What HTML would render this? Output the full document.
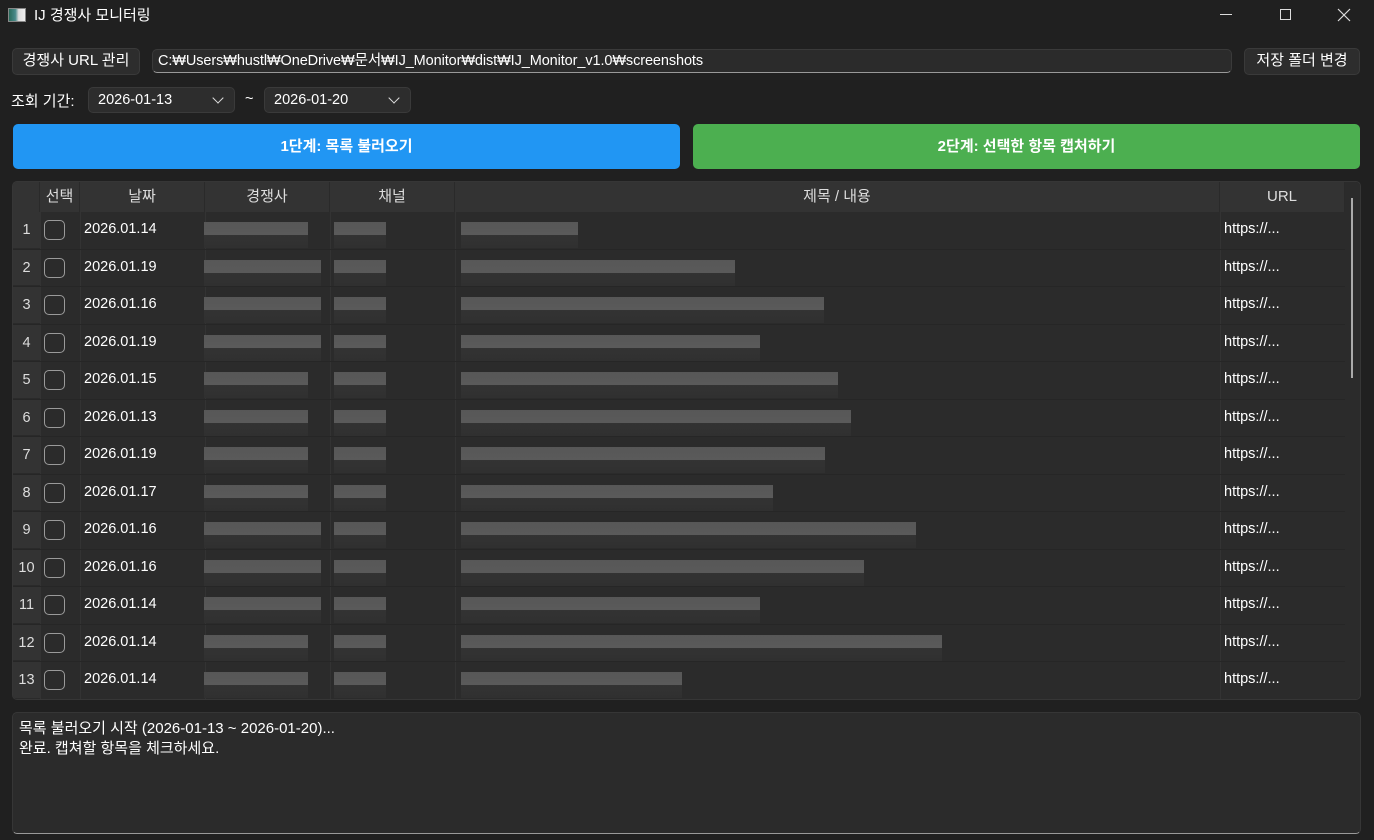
<!DOCTYPE html>
<html><head><meta charset="utf-8">
<style>
*{box-sizing:border-box;margin:0;padding:0}
body{width:1374px;height:840px;background:#202020;font-family:"Segoe UI","Liberation Sans","Noto Sans CJK KR",sans-serif;color:#fff;font-size:14.5px;position:relative;overflow:hidden}
.a{position:absolute}
.btn{background:#2d2d2d;border:1px solid #3a3a3a;border-radius:5px;text-align:center;line-height:24px;font-size:15px}
.combo{background:#2d2d2d;border:1px solid #3a3a3a;border-radius:5px;font-size:14.5px;padding-left:9px;line-height:24px}
.chev{position:absolute;right:12px;top:6px;width:8px;height:8px;border-right:1.5px solid #ddd;border-bottom:1.5px solid #ddd;transform:rotate(45deg)}
.tbl{left:12px;top:181px;width:1349px;height:519px;background:#2b2b2b;border:1px solid #363636;border-radius:5px;overflow:hidden}
.hd{position:absolute;top:0;height:30px;background:#333;border-right:1px solid #2a2a2a;line-height:30px;text-align:center;color:#ddd;font-size:15px}
.row{position:absolute;left:0;width:1332px;height:37.5px;border-bottom:1px solid #262626}
.vh{position:absolute;left:0;width:27px;height:100%;background:#333;color:#ddd;text-align:center;font-size:14.5px;padding-top:10px;border-bottom:1px solid #2a2a2a}
.cb{position:absolute;left:31px;top:8px;width:21px;height:20px;border:1.5px solid #9a9a9a;border-radius:5px}
.dt{position:absolute;left:71px;top:9px;font-size:14.5px}
.url{position:absolute;left:1211px;top:9px;font-size:14.5px}
.bl{position:absolute;top:10px;height:26px;background:linear-gradient(#575757 0,#5a5a5a 13px,#333 13px,#303030 26px)}
.cl{position:absolute;top:0;height:100%;border-right:1px solid #333}
</style></head><body>
<div class="a" style="left:8px;top:8px;width:18px;height:14px;background:linear-gradient(90deg,#2a6a5a 0,#4a8a8a 40%,#ddd 60%,#eee);border:1px solid #888"></div>
<div class="a" style="left:34px;top:4px;font-size:15px">IJ 경쟁사 모니터링</div>
<div class="a" style="left:1220px;top:14px;width:12px;height:1px;background:#ddd"></div>
<div class="a" style="left:1280px;top:9px;width:11px;height:11px;border:1px solid #ddd"></div>
<svg class="a" style="left:1337px;top:8px" width="14" height="14"><path d="M1 1L13 13M13 1L1 13" stroke="#ddd" stroke-width="1.2"/></svg>

<div class="a btn" style="left:12px;top:48px;width:128px;height:27px">경쟁사 URL 관리</div>
<div class="a" style="left:152px;top:49px;width:1080px;height:24px;background:#2b2b2b;border:1px solid #3a3a3a;border-bottom:1px solid #999;border-radius:5px;padding-left:5px;line-height:22px;font-size:14.5px;letter-spacing:-0.1px">C:₩Users₩hustl₩OneDrive₩문서₩IJ_Monitor₩dist₩IJ_Monitor_v1.0₩screenshots</div>
<div class="a btn" style="left:1244px;top:48px;width:116px;height:27px">저장 폴더 변경</div>

<div class="a" style="left:11px;top:90px;font-size:15px">조회 기간:</div>
<div class="a combo" style="left:88px;top:87px;width:147px;height:26px">2026-01-13<span class="chev"></span></div>
<div class="a" style="left:245px;top:91px">~</div>
<div class="a combo" style="left:264px;top:87px;width:147px;height:26px">2026-01-20<span class="chev"></span></div>

<div class="a" style="left:13px;top:124px;width:667px;height:45px;background:#2196f3;border-radius:5px;text-align:center;line-height:45px;font-weight:bold;font-size:15px">1단계: 목록 불러오기</div>
<div class="a" style="left:693px;top:124px;width:667px;height:45px;background:#4caf50;border-radius:5px;text-align:center;line-height:45px;font-weight:bold;font-size:15px">2단계: 선택한 항목 캡처하기</div>

<div class="a tbl">
<div class="hd" style="left:0;width:27px"></div>
<div class="hd" style="left:27px;width:40px">선택</div>
<div class="hd" style="left:67px;width:125px">날짜</div>
<div class="hd" style="left:192px;width:125px">경쟁사</div>
<div class="hd" style="left:317px;width:125px">채널</div>
<div class="hd" style="left:442px;width:765px">제목 / 내용</div>
<div class="hd" style="left:1207px;width:125px">URL</div>
<div class="a" style="left:1332px;top:0;width:17px;height:519px;background:#2b2b2b"></div>
<div class="a" style="left:1338px;top:16px;width:2px;height:180px;background:#aaa"></div>
<div class="a" style="left:0;top:30px;width:1332px;height:489px">
<div class="cl" style="left:27px"></div><div class="cl" style="left:67px"></div><div class="cl" style="left:192px"></div><div class="cl" style="left:317px"></div><div class="cl" style="left:442px"></div><div class="cl" style="left:1207px"></div>
<div class="row" style="top:0"><div class="vh">1</div><div class="cb"></div><div class="dt">2026.01.14</div><div class="bl" style="left:191px;width:104px"></div><div class="bl" style="left:321px;width:52px"></div><div class="bl" style="left:448px;width:117px"></div><div class="url">https://...</div></div>
<div class="row" style="top:37.5px"><div class="vh">2</div><div class="cb"></div><div class="dt">2026.01.19</div><div class="bl" style="left:191px;width:117px"></div><div class="bl" style="left:321px;width:52px"></div><div class="bl" style="left:448px;width:274px"></div><div class="url">https://...</div></div>
<div class="row" style="top:75px"><div class="vh">3</div><div class="cb"></div><div class="dt">2026.01.16</div><div class="bl" style="left:191px;width:117px"></div><div class="bl" style="left:321px;width:52px"></div><div class="bl" style="left:448px;width:363px"></div><div class="url">https://...</div></div>
<div class="row" style="top:112.5px"><div class="vh">4</div><div class="cb"></div><div class="dt">2026.01.19</div><div class="bl" style="left:191px;width:117px"></div><div class="bl" style="left:321px;width:52px"></div><div class="bl" style="left:448px;width:299px"></div><div class="url">https://...</div></div>
<div class="row" style="top:150px"><div class="vh">5</div><div class="cb"></div><div class="dt">2026.01.15</div><div class="bl" style="left:191px;width:104px"></div><div class="bl" style="left:321px;width:52px"></div><div class="bl" style="left:448px;width:377px"></div><div class="url">https://...</div></div>
<div class="row" style="top:187.5px"><div class="vh">6</div><div class="cb"></div><div class="dt">2026.01.13</div><div class="bl" style="left:191px;width:104px"></div><div class="bl" style="left:321px;width:52px"></div><div class="bl" style="left:448px;width:390px"></div><div class="url">https://...</div></div>
<div class="row" style="top:225px"><div class="vh">7</div><div class="cb"></div><div class="dt">2026.01.19</div><div class="bl" style="left:191px;width:104px"></div><div class="bl" style="left:321px;width:52px"></div><div class="bl" style="left:448px;width:364px"></div><div class="url">https://...</div></div>
<div class="row" style="top:262.5px"><div class="vh">8</div><div class="cb"></div><div class="dt">2026.01.17</div><div class="bl" style="left:191px;width:104px"></div><div class="bl" style="left:321px;width:52px"></div><div class="bl" style="left:448px;width:312px"></div><div class="url">https://...</div></div>
<div class="row" style="top:300px"><div class="vh">9</div><div class="cb"></div><div class="dt">2026.01.16</div><div class="bl" style="left:191px;width:117px"></div><div class="bl" style="left:321px;width:52px"></div><div class="bl" style="left:448px;width:455px"></div><div class="url">https://...</div></div>
<div class="row" style="top:337.5px"><div class="vh">10</div><div class="cb"></div><div class="dt">2026.01.16</div><div class="bl" style="left:191px;width:117px"></div><div class="bl" style="left:321px;width:52px"></div><div class="bl" style="left:448px;width:403px"></div><div class="url">https://...</div></div>
<div class="row" style="top:375px"><div class="vh">11</div><div class="cb"></div><div class="dt">2026.01.14</div><div class="bl" style="left:191px;width:117px"></div><div class="bl" style="left:321px;width:52px"></div><div class="bl" style="left:448px;width:299px"></div><div class="url">https://...</div></div>
<div class="row" style="top:412.5px"><div class="vh">12</div><div class="cb"></div><div class="dt">2026.01.14</div><div class="bl" style="left:191px;width:104px"></div><div class="bl" style="left:321px;width:52px"></div><div class="bl" style="left:448px;width:481px"></div><div class="url">https://...</div></div>
<div class="row" style="top:450px"><div class="vh">13</div><div class="cb"></div><div class="dt">2026.01.14</div><div class="bl" style="left:191px;width:104px"></div><div class="bl" style="left:321px;width:52px"></div><div class="bl" style="left:448px;width:221px"></div><div class="url">https://...</div></div>
</div>
</div>

<div class="a" style="left:12px;top:712px;width:1349px;height:122px;background:#2b2b2b;border:1px solid #363636;border-bottom:1px solid #999;border-radius:5px;padding:6px 6px;font-size:15px;line-height:20px">목록 불러오기 시작 (2026-01-13 ~ 2026-01-20)...<br>완료. 캡쳐할 항목을 체크하세요.</div>
</body></html>
